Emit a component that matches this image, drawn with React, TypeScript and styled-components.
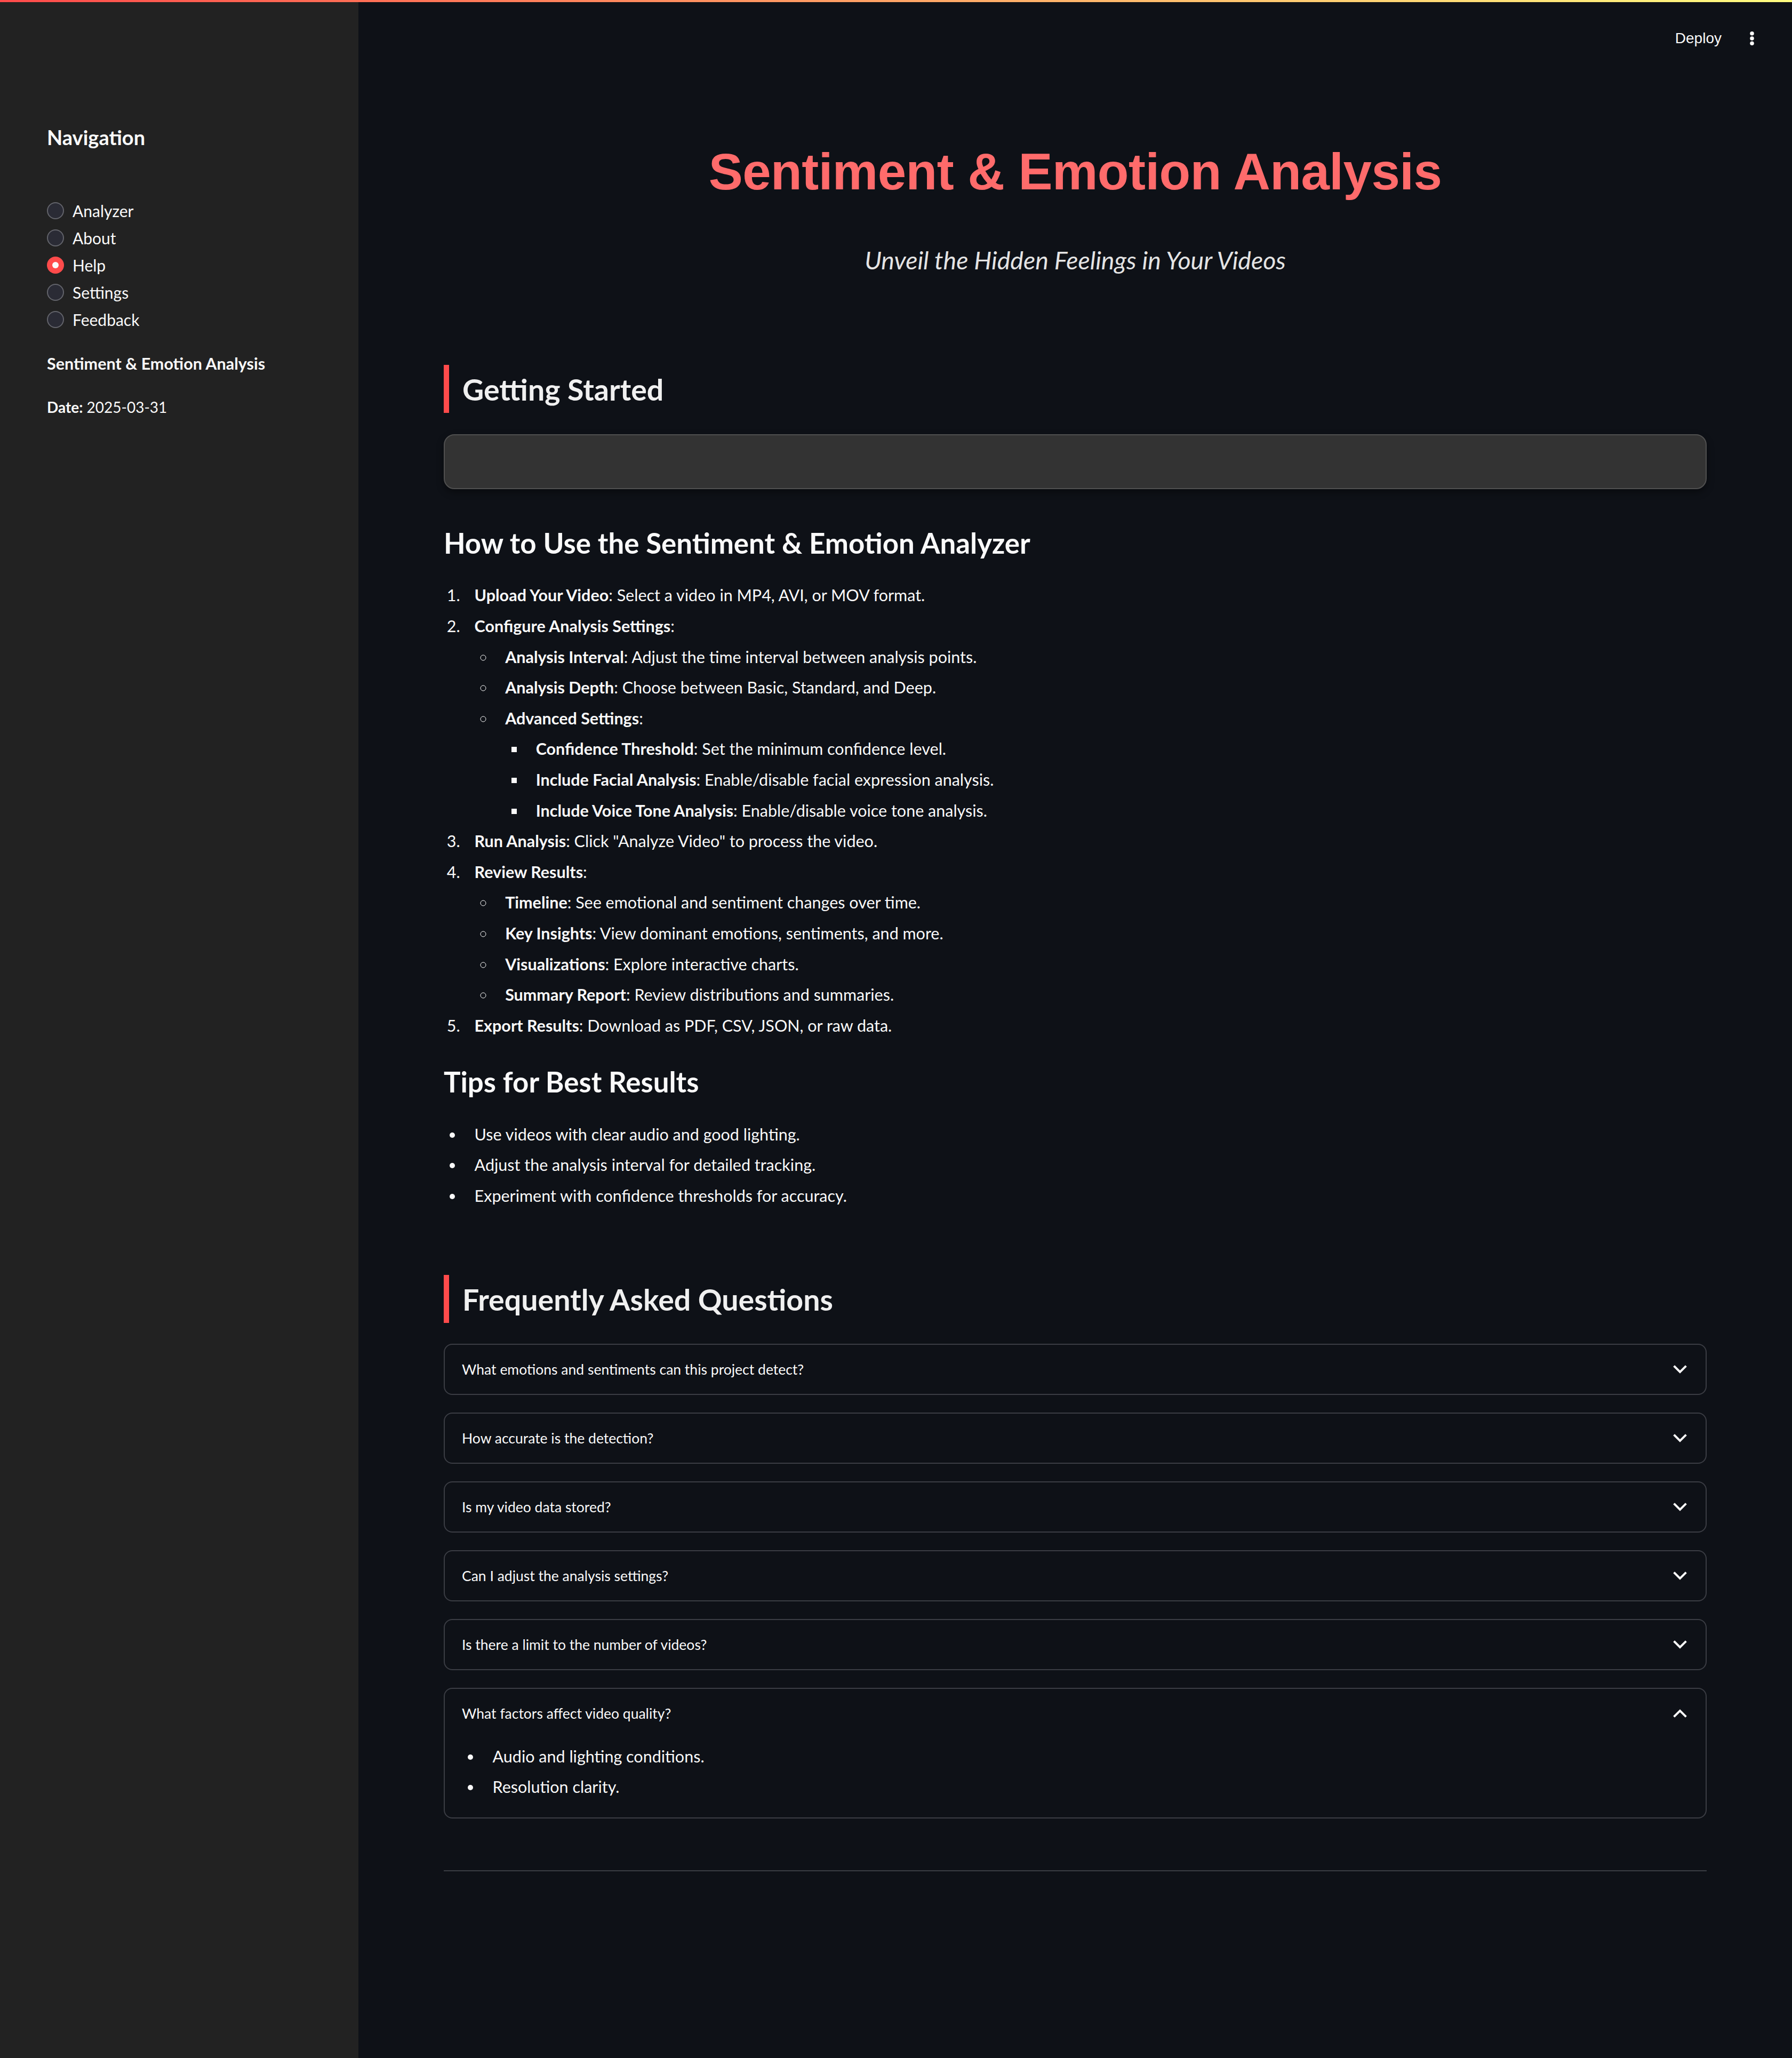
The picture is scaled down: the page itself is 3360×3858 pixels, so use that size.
import React from "react";
import styled, { createGlobalStyle } from "styled-components";

const GlobalStyle = createGlobalStyle`
  html, body { margin: 0; padding: 0; background: #0e1117; }
  body {
    font-family: Lato, "Noto Sans", sans-serif;
    color: #fafafa;
    -webkit-font-smoothing: antialiased;
  }
  * { box-sizing: border-box; }
`;

const Decoration = styled.div`
  position: absolute;
  top: 0;
  left: 0;
  right: 0;
  height: 4px;
  background: linear-gradient(90deg, #ff4b4b, #fffd80);
  z-index: 10;
`;

const Shell = styled.div`
  position: relative;
  display: flex;
  min-height: 3858px;
`;

const Sidebar = styled.aside`
  width: 672px;
  flex: none;
  background: #222222;
  padding: 231px 88px 0;
  display: flex;
  flex-direction: column;
`;

const NavTitle = styled.div`
  font-size: 38px;
  font-weight: 700;
  line-height: 52px;
  color: #fafafa;
`;

const RadioGroup = styled.div`
  margin-top: 86px;
  display: flex;
  flex-direction: column;
`;

const RadioRow = styled.label`
  height: 51.2px;
  display: flex;
  align-items: center;
  gap: 16px;
  font-size: 30px;
  color: #fafafa;
`;

const RadioDot = styled.span<{ $on?: boolean }>`
  width: 32px;
  height: 32px;
  border-radius: 50%;
  flex: none;
  display: flex;
  align-items: center;
  justify-content: center;
  background: ${(p) => (p.$on ? "#ff4b4b" : "#2a2b35")};
  border: ${(p) => (p.$on ? "none" : "2px solid #63646b")};
  &::after {
    content: "";
    display: ${(p) => (p.$on ? "block" : "none")};
    width: 12px;
    height: 12px;
    border-radius: 50%;
    background: #fafafa;
  }
`;

const SideText = styled.div<{ $top: number; $size: number }>`
  margin-top: ${(p) => p.$top}px;
  font-size: ${(p) => p.$size}px;
  line-height: 40px;
  color: #fafafa;
  strong { font-weight: 700; }
`;

const Main = styled.main`
  flex: 1;
  min-width: 0;
  display: flex;
  flex-direction: column;
`;

const Header = styled.header`
  height: 144px;
  display: flex;
  align-items: center;
  justify-content: flex-end;
  gap: 37px;
  padding-right: 55px;
`;

const DeployButton = styled.span`
  font-family: "Liberation Sans", Arial, sans-serif;
  font-size: 28px;
  color: #fafafa;
`;

const Kebab = styled.span`
  width: 40px;
  display: flex;
  justify-content: center;
`;

const Content = styled.div`
  padding: 0 160px 120px;
  display: flex;
  flex-direction: column;
`;

const Title = styled.h1`
  margin: 118px 0 0;
  text-align: center;
  font-family: "Liberation Sans", Arial, sans-serif;
  font-weight: 700;
  font-size: 96px;
  line-height: 120px;
  letter-spacing: -0.5px;
  color: #ff6b6b;
`;

const Subtitle = styled.p`
  margin: 73px 0 0;
  text-align: center;
  font-style: italic;
  font-size: 46.5px;
  line-height: 64px;
  color: #e4e4e4;
`;

const SectionHeader = styled.h2<{ $top: number }>`
  margin: ${(p) => p.$top}px 0 0;
  height: 90px;
  display: flex;
  align-items: center;
  border-left: 10px solid #ff4b4b;
  padding-left: 25px;
  font-size: 55.5px;
  font-weight: 700;
  color: #f0f0f0;
`;

const InfoBox = styled.div`
  margin-top: 40px;
  height: 103px;
  background: #333333;
  border: 2px solid #505050;
  border-radius: 20px;
  box-shadow: 0 6px 14px rgba(0, 0, 0, 0.4);
`;

const SubHeading = styled.h3<{ $top: number }>`
  margin: ${(p) => p.$top}px 0 0;
  font-size: 52.8px;
  font-weight: 700;
  line-height: 72px;
  color: #fafafa;
`;

const listBase = `
  margin: 0;
  padding: 0;
  & > li {
    margin: 6.4px 0 6.4px 38.4px;
    padding-left: 19.2px;
    font-size: 30.5px;
    line-height: 51.2px;
    color: #fafafa;
  }
  strong { font-weight: 700; }
`;

const OrderedList = styled.ol<{ $top: number }>`
  ${listBase}
  margin-top: ${(p) => p.$top}px;
  list-style: decimal;
`;

const BulletList = styled.ul<{ $top?: number; $kind?: string }>`
  ${listBase}
  margin-top: ${(p) => p.$top ?? 0}px;
  list-style: ${(p) => p.$kind ?? "disc"};
`;

const Accordions = styled.div`
  margin-top: 39px;
  display: flex;
  flex-direction: column;
  gap: 33px;
`;

const AccordionItem = styled.div`
  border: 2px solid #3b3d44;
  border-radius: 16px;
`;

const Summary = styled.div`
  height: 92px;
  display: flex;
  align-items: center;
  justify-content: space-between;
  padding: 0 28px 0 32px;
  font-size: 26.5px;
  color: #fafafa;
`;

const AccordionBody = styled.div`
  padding: 2px 32px 25px;
`;

const Divider = styled.hr`
  margin: 97px 0 0;
  border: none;
  height: 2px;
  background: #3b3d44;
`;

const Chevron = ({ up }: { up?: boolean }) => (
  <svg width="40" height="40" viewBox="0 0 24 24" fill="none" stroke="#fafafa" strokeWidth="2.4" strokeLinecap="square" strokeLinejoin="miter">
    <path d={up ? "M6 15l6-6 6 6" : "M6 9l6 6 6-6"} />
  </svg>
);

const KebabIcon = () => (
  <svg width="12" height="30" viewBox="0 0 12 30" fill="#fafafa">
    <circle cx="6" cy="5.7" r="3.8" />
    <circle cx="6" cy="15" r="3.8" />
    <circle cx="6" cy="24.3" r="3.8" />
  </svg>
);

const navItems = ["Analyzer", "About", "Help", "Settings", "Feedback"];

const faqs = [
  "What emotions and sentiments can this project detect?",
  "How accurate is the detection?",
  "Is my video data stored?",
  "Can I adjust the analysis settings?",
  "Is there a limit to the number of videos?",
];

export default function App() {
  return (
    <>
      <GlobalStyle />
      <Shell>
        <Decoration />
        <Sidebar>
          <NavTitle>Navigation</NavTitle>
          <RadioGroup>
            {navItems.map((n) => (
              <RadioRow key={n}>
                <RadioDot $on={n === "Help"} />
                {n}
              </RadioRow>
            ))}
          </RadioGroup>
          <SideText $top={36} $size={30.5}>
            <strong>Sentiment &amp; Emotion Analysis</strong>
          </SideText>
          <SideText $top={42} $size={28}>
            <strong>Date:</strong> 2025-03-31
          </SideText>
        </Sidebar>
        <Main>
          <Header>
            <DeployButton>Deploy</DeployButton>
            <Kebab>
              <KebabIcon />
            </Kebab>
          </Header>
          <Content>
            <Title>Sentiment &amp; Emotion Analysis</Title>
            <Subtitle>Unveil the Hidden Feelings in Your Videos</Subtitle>

            <SectionHeader $top={165}>Getting Started</SectionHeader>
            <InfoBox />

            <SubHeading $top={65}>How to Use the Sentiment &amp; Emotion Analyzer</SubHeading>
            <OrderedList $top={30}>
              <li>
                <strong>Upload Your Video</strong>: Select a video in MP4, AVI, or MOV format.
              </li>
              <li>
                <strong>Configure Analysis Settings</strong>:
                <BulletList $kind="circle">
                  <li>
                    <strong>Analysis Interval</strong>: Adjust the time interval between analysis points.
                  </li>
                  <li>
                    <strong>Analysis Depth</strong>: Choose between Basic, Standard, and Deep.
                  </li>
                  <li>
                    <strong>Advanced Settings</strong>:
                    <BulletList $kind="square">
                      <li>
                        <strong>Confidence Threshold</strong>: Set the minimum confidence level.
                      </li>
                      <li>
                        <strong>Include Facial Analysis</strong>: Enable/disable facial expression analysis.
                      </li>
                      <li>
                        <strong>Include Voice Tone Analysis</strong>: Enable/disable voice tone analysis.
                      </li>
                    </BulletList>
                  </li>
                </BulletList>
              </li>
              <li>
                <strong>Run Analysis</strong>: Click "Analyze Video" to process the video.
              </li>
              <li>
                <strong>Review Results</strong>:
                <BulletList $kind="circle">
                  <li>
                    <strong>Timeline</strong>: See emotional and sentiment changes over time.
                  </li>
                  <li>
                    <strong>Key Insights</strong>: View dominant emotions, sentiments, and more.
                  </li>
                  <li>
                    <strong>Visualizations</strong>: Explore interactive charts.
                  </li>
                  <li>
                    <strong>Summary Report</strong>: Review distributions and summaries.
                  </li>
                </BulletList>
              </li>
              <li>
                <strong>Export Results</strong>: Download as PDF, CSV, JSON, or raw data.
              </li>
            </OrderedList>

            <SubHeading $top={38}>Tips for Best Results</SubHeading>
            <BulletList $top={30}>
              <li>Use videos with clear audio and good lighting.</li>
              <li>Adjust the analysis interval for detailed tracking.</li>
              <li>Experiment with confidence thresholds for accuracy.</li>
            </BulletList>

            <SectionHeader $top={117}>Frequently Asked Questions</SectionHeader>
            <Accordions>
              {faqs.map((q) => (
                <AccordionItem key={q}>
                  <Summary>
                    <span>{q}</span>
                    <Chevron />
                  </Summary>
                </AccordionItem>
              ))}
              <AccordionItem>
                <Summary>
                  <span>What factors affect video quality?</span>
                  <Chevron up />
                </Summary>
                <AccordionBody>
                  <BulletList>
                    <li>Audio and lighting conditions.</li>
                    <li>Resolution clarity.</li>
                  </BulletList>
                </AccordionBody>
              </AccordionItem>
            </Accordions>
            <Divider />
          </Content>
        </Main>
      </Shell>
    </>
  );
}
